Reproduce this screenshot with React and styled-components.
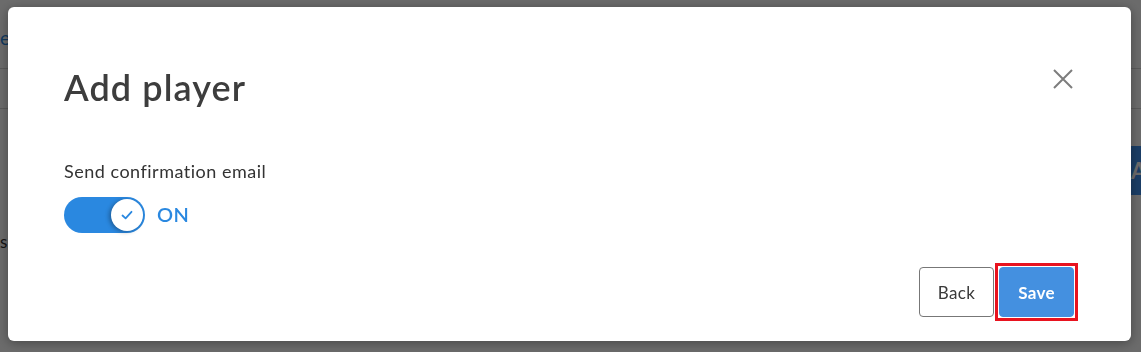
import React from "react"
import styled, { createGlobalStyle } from "styled-components"

const GlobalStyle = createGlobalStyle`
  html, body {
    margin: 0;
    padding: 0;
    width: 100%;
    height: 100%;
    overflow: hidden;
  }
  body {
    font-family: Lato, "Open Sans", Arial, sans-serif;
    background: #ffffff;
  }
  * {
    box-sizing: border-box;
  }
`

const colors = {
  blue: "#2a88e0",
  saveBlue: "#4490e0",
  text: "#3a3a3a",
  title: "#3d3d3d",
  grey: "#7d7d7d",
  red: "#e8131f",
}

// page that sits behind the dialog
const Page = styled.div`
  width: 1141px;
  height: 352px;
  overflow: hidden;
  background: #ffffff;
`

const TopBar = styled.header`
  height: 69px;
  display: flex;
  align-items: center;
  border-bottom: 1px solid #d6d6d6;
  color: ${colors.blue};
  font-size: 19px;
  padding-top: 6px;
`

const SubBar = styled.div`
  height: 40px;
  border-bottom: 1px solid #d6d6d6;
`

const Toolbar = styled.div`
  display: flex;
  justify-content: flex-end;
  padding-top: 37px;
  margin-right: -120px;
`

const PageButton = styled.div`
  width: 136px;
  height: 49px;
  display: flex;
  align-items: center;
  padding-left: 6px;
  background: #3f93f2;
  color: #ffffff;
  font-size: 22px;
  font-weight: 700;
`

const PageText = styled.div`
  padding-top: 36px;
  font-size: 17px;
  color: #333;
`

const Backdrop = styled.div`
  position: fixed;
  inset: 0;
  background: rgba(0, 0, 0, 0.58);
  display: flex;
  align-items: flex-start;
  padding: 7px 10px 11px 8px;
`

const Dialog = styled.div`
  width: 1123px;
  height: 334px;
  background: #ffffff;
  border-radius: 6px;
  box-shadow: 0 2px 12px rgba(0, 0, 0, 0.35);
  padding: 60px 57px 24px 56px;
  display: flex;
  flex-direction: column;
`

const Header = styled.div`
  display: flex;
  justify-content: space-between;
  align-items: flex-start;
`

const Title = styled.h2`
  margin: 0;
  font-size: 36px;
  line-height: 40px;
  font-weight: 600;
  color: ${colors.title};
  letter-spacing: 1.1px;
`

const CloseButton = styled.button`
  border: none;
  background: none;
  padding: 0;
  margin-top: 2px;
  margin-right: 1px;
  width: 20px;
  height: 20px;
  cursor: pointer;
  display: flex;
`

const Body = styled.div`
  padding-top: 53px;
  flex: 1;
`

const Label = styled.div`
  font-size: 18px;
  line-height: 22px;
  letter-spacing: 0.5px;
  color: #333333;
`

const SwitchRow = styled.div`
  display: flex;
  align-items: center;
  gap: 12px;
  margin-top: 15px;
`

const Track = styled.div`
  width: 81px;
  height: 36px;
  border-radius: 18px;
  background: ${colors.blue};
  display: flex;
  align-items: center;
  justify-content: flex-end;
  padding: 2px;
`

const Knob = styled.div`
  width: 32px;
  height: 32px;
  border-radius: 50%;
  background: #ffffff;
  box-shadow: -2px 1px 4px rgba(0, 0, 0, 0.3);
  display: flex;
  align-items: center;
  justify-content: center;
`

const SwitchText = styled.span`
  font-size: 20px;
  font-weight: 600;
  letter-spacing: 0.3px;
  color: ${colors.blue};
  margin-top: -3px;
`

const Footer = styled.div`
  display: flex;
  justify-content: flex-end;
  gap: 5px;
`

const Button = styled.button`
  position: relative;
  height: 50px;
  width: 75px;
  padding: 0;
  border-radius: 4px;
  font-family: inherit;
  font-size: 17px;
  letter-spacing: 0.3px;
  cursor: pointer;
  border: 1px solid ${(p) => (p.$primary ? colors.saveBlue : "#777777")};
  background: ${(p) => (p.$primary ? colors.saveBlue : "#ffffff")};
  color: ${(p) => (p.$primary ? "#ffffff" : colors.text)};
  font-weight: ${(p) => (p.$primary ? 700 : 400)};
  outline: none;

  &::after {
    content: "";
    display: ${(p) => (p.$focused ? "block" : "none")};
    position: absolute;
    inset: -5px;
    border: 3px solid ${colors.red};
    pointer-events: none;
  }
`

const App = () => {
  return (
    <>
      <GlobalStyle />
      <Page>
        <TopBar>eam</TopBar>
        <SubBar />
        <Toolbar>
          <PageButton>Add</PageButton>
        </Toolbar>
        <PageText>s</PageText>
      </Page>
      <Backdrop>
        <Dialog role="dialog">
          <Header>
            <Title>Add player</Title>
            <CloseButton aria-label="Close">
              <svg width="20" height="20" viewBox="0 0 20 20">
                <path
                  d="M1 1 L19 19 M19 1 L1 19"
                  stroke={colors.grey}
                  strokeWidth="2"
                  fill="none"
                />
              </svg>
            </CloseButton>
          </Header>
          <Body>
            <Label>Send confirmation email</Label>
            <SwitchRow>
              <Track>
                <Knob>
                  <svg width="14" height="14" viewBox="0 0 14 14">
                    <path
                      d="M2.5 7.5 L5.6 10.3 L11.5 3.8"
                      stroke={colors.blue}
                      strokeWidth="1.8"
                      fill="none"
                      strokeLinecap="round"
                      strokeLinejoin="round"
                    />
                  </svg>
                </Knob>
              </Track>
              <SwitchText>ON</SwitchText>
            </SwitchRow>
          </Body>
          <Footer>
            <Button>Back</Button>
            <Button $primary $focused>
              Save
            </Button>
          </Footer>
        </Dialog>
      </Backdrop>
    </>
  )
}

export default App
